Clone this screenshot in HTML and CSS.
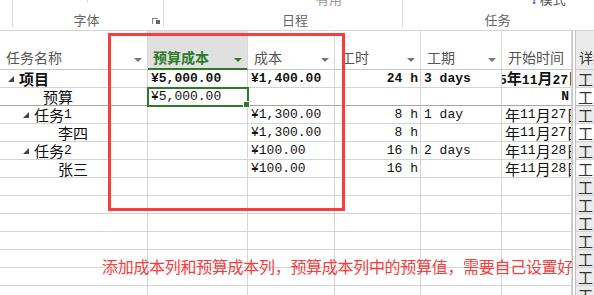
FILE: index.html
```html
<!DOCTYPE html>
<html>
<head>
    <title>预算成本</title>
    <link rel="stylesheet" href="styles.css">
</head>
<body>
    <div class="ribbon">
        <div class="group g-left"></div>
        <div class="group g-font">
            <span class="cut cut-a"></span>
            <span class="label">字体</span>
            <span class="launcher"></span>
        </div>
        <div class="group g-plan">
            <span class="peek peek-use">有用</span>
            <span class="label">日程</span>
        </div>
        <div class="group g-task">
            <span class="peek peek-mode"><span class="qmark">?</span>模式</span>
            <span class="label">任务</span>
        </div>
    </div>

    <div class="header">
        <div class="hcell">任务名称<span class="arrow"></span></div>
        <div class="hcell active">预算成本<span class="arrow green"></span></div>
        <div class="hcell">成本<span class="arrow"></span></div>
        <div class="hcell">工时<span class="arrow"></span></div>
        <div class="hcell">工期<span class="arrow"></span></div>
        <div class="hcell">开始时间</div>
        <div class="split"></div>
        <div class="hcell side">详细</div>
    </div>

    <div class="sheet">
        <div class="cell name bold"><span class="tri"></span><span class="cj">项目</span></div>
        <div class="cell bold">¥5,000.00</div>
        <div class="cell bold">¥1,400.00</div>
        <div class="cell bold right">24 h</div>
        <div class="cell bold">3 days</div>
        <div class="cell bold date"><span class="shift">5<span class="cj">年</span>11<span class="cj">月</span>27<span class="cj">日</span></span></div>
        <div class="split"></div>
        <div class="cell side"><span class="cj">工</span></div>

        <div class="cell name lvl2 sep"><span class="cj">预算</span></div>
        <div class="cell sep selected">¥5,000.00<span class="handle"></span></div>
        <div class="cell sep"></div>
        <div class="cell sep"></div>
        <div class="cell sep"></div>
        <div class="cell sep right bold">N</div>
        <div class="split"></div>
        <div class="cell side white sep"><span class="cj">工</span></div>

        <div class="cell name lvl1"><span class="tri"></span><span class="cj">任务</span>1</div>
        <div class="cell"></div>
        <div class="cell">¥1,300.00</div>
        <div class="cell right">8 h</div>
        <div class="cell">1 day</div>
        <div class="cell date"><span class="cj">年</span>11<span class="cj">月</span>27<span class="cj">日</span></div>
        <div class="split"></div>
        <div class="cell side"><span class="cj">工</span></div>

        <div class="cell name lvl3"><span class="cj">李四</span></div>
        <div class="cell"></div>
        <div class="cell">¥1,300.00</div>
        <div class="cell right">8 h</div>
        <div class="cell"></div>
        <div class="cell date"><span class="cj">年</span>11<span class="cj">月</span>27<span class="cj">日</span></div>
        <div class="split"></div>
        <div class="cell side white"><span class="cj">工</span></div>

        <div class="cell name lvl1"><span class="tri"></span><span class="cj">任务</span>2</div>
        <div class="cell"></div>
        <div class="cell">¥100.00</div>
        <div class="cell right">16 h</div>
        <div class="cell">2 days</div>
        <div class="cell date"><span class="cj">年</span>11<span class="cj">月</span>28<span class="cj">日</span></div>
        <div class="split"></div>
        <div class="cell side"><span class="cj">工</span></div>

        <div class="cell name lvl3"><span class="cj">张三</span></div>
        <div class="cell"></div>
        <div class="cell">¥100.00</div>
        <div class="cell right">16 h</div>
        <div class="cell"></div>
        <div class="cell date"><span class="cj">年</span>11<span class="cj">月</span>28<span class="cj">日</span></div>
        <div class="split"></div>
        <div class="cell side white"><span class="cj">工</span></div>

        <div class="cell"></div><div class="cell"></div><div class="cell"></div><div class="cell"></div><div class="cell"></div><div class="cell"></div><div class="split"></div><div class="cell side"><span class="cj">工</span></div>
        <div class="cell"></div><div class="cell"></div><div class="cell"></div><div class="cell"></div><div class="cell"></div><div class="cell"></div><div class="split"></div><div class="cell side"><span class="cj">工</span></div>
        <div class="cell"></div><div class="cell"></div><div class="cell"></div><div class="cell"></div><div class="cell"></div><div class="cell"></div><div class="split"></div><div class="cell side"><span class="cj">工</span></div>
        <div class="cell"></div><div class="cell"></div><div class="cell"></div><div class="cell"></div><div class="cell"></div><div class="cell"></div><div class="split"></div><div class="cell side"><span class="cj">工</span></div>
        <div class="cell"></div><div class="cell"></div><div class="cell"></div><div class="cell"></div><div class="cell"></div><div class="cell"></div><div class="split"></div><div class="cell side"><span class="cj">工</span></div>
        <div class="cell"></div><div class="cell"></div><div class="cell"></div><div class="cell"></div><div class="cell"></div><div class="cell"></div><div class="split"></div><div class="cell side"><span class="cj">工</span></div>
        <div class="cell"></div><div class="cell"></div><div class="cell"></div><div class="cell"></div><div class="cell"></div><div class="cell"></div><div class="split"></div><div class="cell side"><span class="cj">工</span></div>
    </div>

    <div class="mark"></div>
    <p class="note">添加成本列和预算成本列，预算成本列中的预算值，需要自己设置好</p>
</body>
</html>
```

FILE: styles.css
```css
body {
    margin: 0;
    width: 594px;
    height: 295px;
    overflow: hidden;
    background: #fff;
    position: relative;
    font-family: "Noto Sans CJK SC", sans-serif;
}

/* ribbon strip */
.ribbon {
    display: grid;
    grid-template-columns: 13px 151px 239px 191px;
    height: 30px;
    border-bottom: 1px solid #d5d5d5;
}

.group {
    position: relative;
    border-right: 1px solid #dadada;
    height: 27px;
    display: flex;
    justify-content: center;
    align-items: flex-end;
}

.g-task {
    border-right: none;
}

.label {
    font-size: 13px;
    line-height: 16px;
    color: #666;
    margin-bottom: -1px;
}

.g-font .label {
    margin-right: 3px;
}

.g-plan .label {
    margin-left: 24px;
}

.g-task .label {
    margin-right: 2px;
}

.cut {
    position: absolute;
    top: 0;
    width: 1px;
    height: 3px;
    background: #dadada;
}

.cut-a {
    left: 74px;
}

.launcher {
    position: absolute;
    right: 5px;
    bottom: 3px;
    width: 5px;
    height: 5px;
    border: 1px solid #888;
    border-bottom: none;
    border-right: none;
}

.launcher::after {
    content: "";
    position: absolute;
    right: -2px;
    bottom: 0;
    width: 4px;
    height: 4px;
    background: #666;
}

.peek {
    position: absolute;
    top: -11px;
    font-size: 13px;
    color: #999;
}

.peek-use {
    left: 152px;
}

.peek-mode {
    left: 128px;
    color: #555;
}

.qmark {
    color: #2b64b8;
    font-weight: bold;
    margin-right: 2px;
}

/* column header */
.header {
    display: grid;
    grid-template-columns: 148px 100px 87px 86px 81px 70px 4px 18px;
    height: 39px;
}

.hcell {
    position: relative;
    border-right: 1px solid #d9d9d9;
    border-bottom: 1px solid #c8c8c8;
    font-size: 14px;
    color: #555;
    display: flex;
    align-items: flex-end;
    padding: 0 0 2px 6px;
    white-space: nowrap;
    overflow: hidden;
}

.hcell.active {
    background: #e0e0e0;
    color: #2d7a2a;
    font-weight: bold;
    border-bottom: 2px solid #2d7a2a;
    padding-bottom: 1px;
    padding-left: 5px;
}

.hcell.side {
    border-right: none;
    padding-left: 3px;
}

.arrow {
    position: absolute;
    right: 5px;
    bottom: 7px;
    border-left: 4px solid transparent;
    border-right: 4px solid transparent;
    border-top: 4px solid #777;
}

.arrow.green {
    border-top-color: #2d7a2a;
    bottom: 6px;
}

.split {
    border-left: 1px solid #c2c2c2;
    border-right: 1px solid #c2c2c2;
}

/* rows */
.sheet {
    display: grid;
    grid-template-columns: 148px 100px 87px 86px 81px 70px 4px 18px;
    grid-auto-rows: 18px;
}

.cell {
    position: relative;
    border-right: 1px solid #d4d4d4;
    border-bottom: 1px solid #d4d4d4;
    font-family: "Liberation Mono", "Noto Sans CJK SC", monospace;
    font-size: 13px;
    color: #111;
    display: flex;
    align-items: center;
    padding-left: 3px;
    white-space: nowrap;
    overflow: hidden;
}

.cj {
    font-family: "Noto Sans CJK SC", sans-serif;
    font-size: 15px;
    line-height: 17px;
}

.bold {
    font-weight: bold;
}

.right {
    justify-content: flex-end;
    padding-right: 2px;
}

.sep {
    border-bottom-color: #a6a6a6;
}

.name {
    padding-left: 8px;
}

.lvl1 {
    padding-left: 23px;
}

.lvl2 {
    padding-left: 43px;
}

.lvl3 {
    padding-left: 58px;
}

.tri {
    width: 0;
    height: 0;
    border-left: 6px solid transparent;
    border-bottom: 6px solid #444;
    margin-right: 5px;
}

.date {
    padding-left: 3px;
}

.shift {
    margin-left: -6px;
}

.selected {
    overflow: visible;
    outline: 2px solid #2d7a2a;
    outline-offset: -1px;
    z-index: 1;
}

.handle {
    position: absolute;
    right: -3px;
    bottom: -3px;
    width: 5px;
    height: 5px;
    background: #2d7a2a;
    border: 1px solid #fff;
}

.side {
    background: #ebebeb;
    border-right: none;
    padding-left: 2px;
    color: #333;
}

.side.white {
    background: #fff;
}

/* annotation drawn over the sheet */
.mark {
    position: absolute;
    left: 108px;
    top: 33px;
    width: 231px;
    height: 172px;
    border: 3px solid #fa3c3c;
}

.note {
    position: absolute;
    left: 102px;
    top: 257px;
    margin: 0;
    font-size: 16px;
    line-height: 18px;
    letter-spacing: -0.3px;
    color: #fa3c3c;
    white-space: nowrap;
}
```
